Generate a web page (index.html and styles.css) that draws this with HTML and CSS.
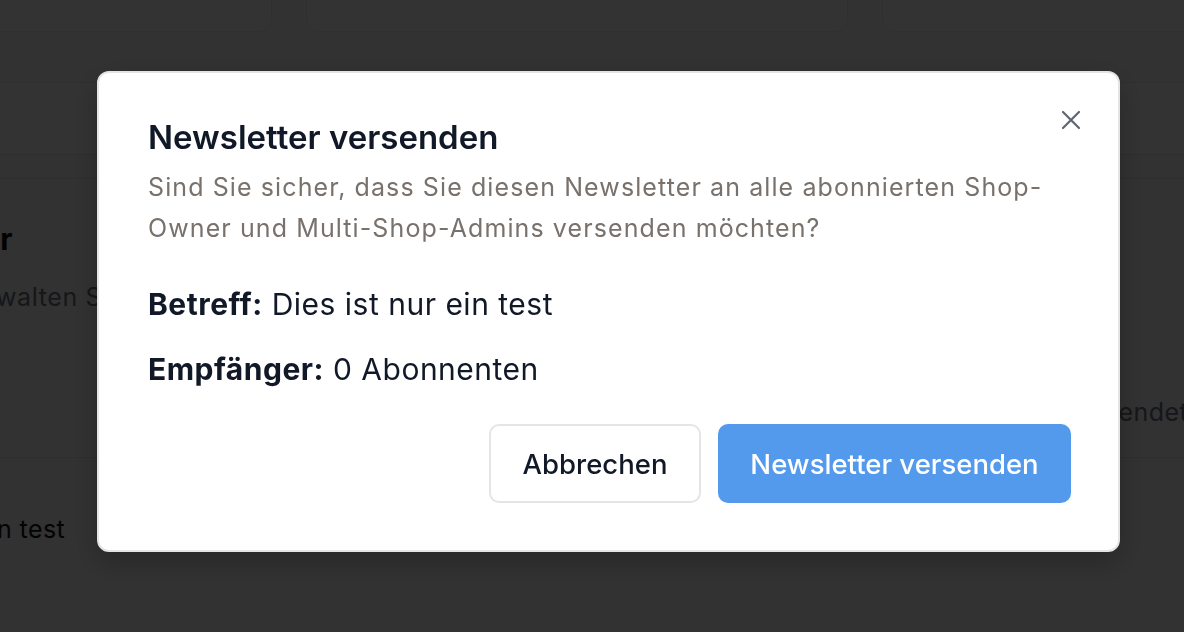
FILE: index.html
```html
<!DOCTYPE html>
<html lang="de">
<head>
<meta charset="utf-8">
<title>Newsletter versenden</title>
<link rel="stylesheet" href="styles.css">
</head>
<body>
<div class="page">
  <div class="cards">
    <div class="card card-a"></div>
    <div class="card card-b"></div>
    <div class="card card-c"></div>
  </div>
  <div class="toolbar"></div>
  <div class="divider"></div>
  <div class="section-head">
    <h1 class="section-title">Newsletter</h1>
    <p class="section-sub">Verwalten Sie Ihre Newsletter</p>
  </div>
  <div class="table">
    <div class="table-head"><span class="th-right">Versendet</span></div>
    <div class="table-row"><span class="td-first">Dies ist nur ein test</span></div>
  </div>
</div>

<div class="overlay">
  <div class="dialog" role="dialog" aria-labelledby="dlg-title">
    <button class="close" aria-label="Schließen">
      <svg width="20" height="20" viewBox="0 0 20 20" fill="none" stroke="currentColor" stroke-width="2.2" stroke-linecap="round"><path d="M2 2 L18 18 M18 2 L2 18"/></svg>
    </button>
    <h2 class="dlg-title" id="dlg-title">Newsletter versenden</h2>
    <p class="dlg-desc">Sind Sie sicher, dass Sie diesen Newsletter an alle abonnierten Shop-Owner und Multi-Shop-Admins versenden möchten?</p>
    <div class="facts">
      <p class="fact"><strong>Betreff:</strong> Dies ist nur ein test</p>
      <p class="fact"><strong>Empfänger:</strong> 0 Abonnenten</p>
    </div>
    <div class="actions">
      <button class="btn btn-cancel">Abbrechen</button>
      <button class="btn btn-send">Newsletter versenden</button>
    </div>
  </div>
</div>
</body>
</html>
```

FILE: styles.css
```css
* { box-sizing: border-box; }

html, body {
  margin: 0;
  padding: 0;
  width: 1184px;
  height: 632px;
  overflow: hidden;
  background: #f7f7f7;
  font-family: Inter, "Noto Sans", "Liberation Sans", sans-serif;
}

/* ---------- underlying page ---------- */
.page {
  width: 1184px;
}

.cards {
  display: flex;
  gap: 34px;
  margin-top: -60px;
  margin-left: -228px;
}

.card {
  flex: none;
  height: 92px;
  background: #ffffff;
  border: 1px solid #ececec;
  border-radius: 14px;
}
.card-a { width: 500px; }
.card-b { width: 542px; }
.card-c { width: 542px; }

.toolbar {
  margin-top: 50px;
  height: 73px;
  background: #ffffff;
  border-top: 1px solid #ececec;
  border-bottom: 1px solid #e6e6e6;
}

.divider {
  margin-top: 23px;
  height: 1px;
  background: #e6e6e6;
}

.section-head {
  padding-top: 40px;
}

.section-title {
  margin: 0 0 0 -147px;
  font-size: 30px;
  line-height: 40px;
  font-weight: 700;
  color: #0b0b0b;
}

.section-sub {
  margin: 22px 0 0 -46px;
  font-size: 25px;
  line-height: 32px;
  letter-spacing: 0.6px;
  color: #6b7280;
}

.table {
  margin-top: 83px;
}

.table-head {
  display: flex;
  justify-content: flex-end;
  height: 62px;
  border-bottom: 1px solid #e3e3e3;
  margin-right: -4px;
}

.th-right {
  font-size: 25px;
  line-height: 32px;
  letter-spacing: 0.4px;
  color: #6b7280;
}

.table-row {
  padding-top: 55px;
  margin-left: -169px;
}

.td-first {
  font-size: 25px;
  line-height: 32px;
  letter-spacing: 0.4px;
  color: #111111;
}

/* ---------- overlay + dialog ---------- */
.overlay {
  position: fixed;
  inset: 0;
  background: rgba(0, 0, 0, 0.8);
  padding: 71px 0 0 97px;
}

.dialog {
  position: relative;
  width: 1023px;
  height: 481px;
  background: #ffffff;
  border: 2px solid #e4e4e4;
  border-radius: 12px;
  padding: 44px 47px 47px 49px;
  box-shadow: 0 10px 30px rgba(0, 0, 0, 0.25);
  display: flex;
  flex-direction: column;
}

.close {
  position: absolute;
  top: 37px;
  right: 37px;
  width: 20px;
  height: 20px;
  padding: 0;
  border: 0;
  background: none;
  color: #5f6470;
  display: flex;
}

.dlg-title {
  margin: 0;
  font-size: 33px;
  line-height: 40px;
  font-weight: 600;
  color: #111827;
}

.dlg-desc {
  margin: 10px 0 0;
  font-size: 25px;
  line-height: 41px;
  letter-spacing: 1.1px;
  color: #78716c;
}

.facts {
  margin-top: 35px;
  display: flex;
  flex-direction: column;
  gap: 25px;
}

.fact {
  margin: 0;
  font-size: 30px;
  line-height: 40px;
  letter-spacing: 0.5px;
  color: #111827;
}

.fact strong {
  font-weight: 700;
}

.actions {
  margin-top: auto;
  display: flex;
  justify-content: flex-end;
  gap: 17px;
}

.btn {
  height: 79px;
  border-radius: 10px;
  font-family: Inter, "Noto Sans", "Liberation Sans", sans-serif;
  font-size: 27.5px;
  font-weight: 500;
  padding: 0;
}

.btn-cancel {
  width: 212px;
  background: #ffffff;
  border: 2px solid #e5e5e5;
  color: #111827;
}

.btn-send {
  width: 353px;
  background: #5399ec;
  border: 0;
  color: #ffffff;
}
```
